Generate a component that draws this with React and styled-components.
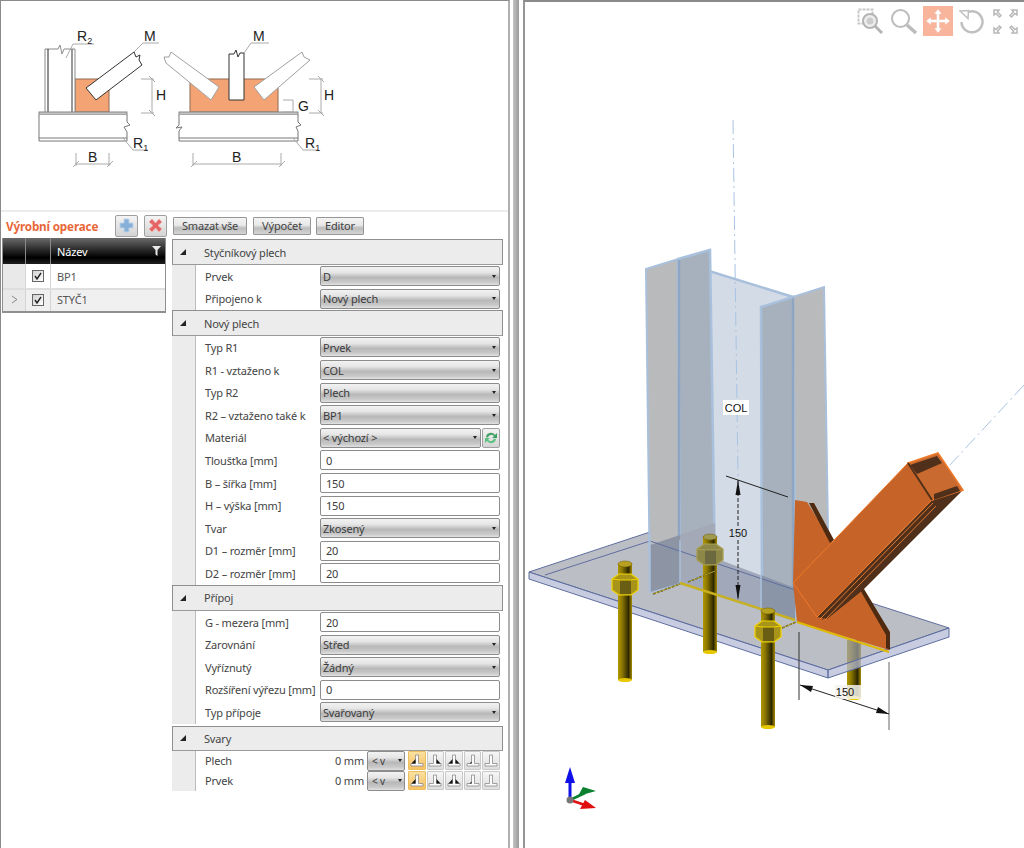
import React from 'react'
import styled, { createGlobalStyle } from 'styled-components'

const GlobalStyle = createGlobalStyle`
  html, body {
    margin: 0;
    padding: 0;
    background: #fff;
  }
  body {
    font-family: "Noto Sans", "Open Sans", "Liberation Sans", sans-serif;
    font-size: 11px;
    letter-spacing: -0.17px;
    color: #333;
  }
`

const Page = styled.div`
  display: flex;
  width: 1024px;
  height: 848px;
  overflow: hidden;
`

const LeftPane = styled.div`
  width: 510px;
  box-sizing: border-box;
  border-top: 1px solid #8a8a8a;
  border-left: 1px solid #8a8a8a;
  border-right: 2px solid #b0b0b0;
  display: flex;
  flex-direction: column;
`

const Splitter = styled.div`
  width: 13px;
  display: flex;
  justify-content: center;
  & > div {
    width: 6px;
    margin-right: 1px;
    background: linear-gradient(90deg, #c4c4c4, #9a9a9a);
  }
`

const RightPane = styled.div`
  position: relative;
  flex: 1;
  box-sizing: border-box;
  border-top: 2px solid #8a8a8a;
  border-left: 2px solid #969696;
`

const DiagramBox = styled.div`
  height: 209px;
  border-bottom: 2px solid #ececec;
`

const Toolbar = styled.div`
  height: 27px;
  display: flex;
  align-items: center;
  padding-left: 5px;
`

const ToolTitle = styled.span`
  width: 109px;
  font-size: 11.7px;
  font-weight: 700;
  color: #e8683a;
`

const IconButton = styled.button`
  width: 23px;
  height: 22px;
  margin-right: 6px;
  padding: 0;
  display: flex;
  align-items: center;
  justify-content: center;
  background: linear-gradient(#f4f4f4, #d4d4d4);
  border: 1px solid #a0a0a0;
  border-radius: 2px;
`

const TextButton = styled.button`
  height: 18px;
  padding: 0;
  width: ${p => p.$w}px;
  margin-right: ${p => p.$gap}px;
  font: inherit;
  letter-spacing: inherit;
  color: #444;
  background: linear-gradient(#f4f4f4 0%, #e8e8e8 45%, #bdbdbd 62%, #d4d4d4 100%);
  border: 1px solid #969696;
  border-radius: 1px;
`

const Body = styled.div`
  display: flex;
  align-items: flex-start;
  padding-left: 1px;
`

const GridTable = styled.div`
  width: 164px;
  margin-top: -1px;
  box-sizing: border-box;
  border: 1px solid #8f8f8f;
  border-top: 0;
  border-bottom-width: 2px;
`

const GridRow = styled.div`
  display: grid;
  grid-template-columns: 23px 25px 1fr;
  height: ${p => p.$h}px;
  background: ${p => p.$alt ? '#f0f0f0' : '#fff'};
  border-top: ${p => p.$alt ? '2px solid #dedede' : '0'};
  box-sizing: border-box;
`

const GridHead = styled(GridRow)`
  height: 26px;
  color: #fff;
  background: linear-gradient(#6a6a6a 0%, #2a2a2a 45%, #000 75%, #1e1e1e 100%);
`

const HeadCell = styled.div`
  display: flex;
  align-items: center;
  justify-content: space-between;
  padding: 0 4px 0 6px;
  border-right: 1px solid #8a8a8a;
  &:last-child { border-right: 0; }
`

const Cell = styled.div`
  display: flex;
  align-items: center;
  justify-content: ${p => p.$center ? 'center' : 'flex-start'};
  padding-left: ${p => p.$center ? 0 : 6}px;
  padding-bottom: ${p => p.$alt ? 2 : 0}px;
  background: ${p => p.$gutter ? '#e9e9e9' : 'transparent'};
  color: #555;
  border-right: 1px solid #d4d4d4;
  &:last-child { border-right: 0; }
`

const Check = styled.span`
  width: 10px;
  height: 10px;
  border: 1px solid #666;
  background: linear-gradient(135deg, #d0d0d0, #fff);
  display: flex;
  align-items: center;
  justify-content: center;
`

const Props = styled.div`
  width: 331px;
  margin-left: 6px;
`

const SectionHead = styled.div`
  height: ${p => p.$h || 26}px;
  box-sizing: border-box;
  display: flex;
  align-items: center;
  background: #ececec;
  border: 1px solid #8f8f8f;
  border-bottom-color: #9a9a9a;
  margin-top: ${p => p.$mt || 0}px;
  color: #444;
  span { margin-left: 18px; }
  svg { margin-left: 7px; }
`

const SectionBody = styled.div`
  border-left: 1px solid #bcbcbc;
`

const Gutter = styled.div`
  background: #ececec;
`

const SectionWrap = styled.div`
  display: grid;
  grid-template-columns: 23px 1fr;
`

const Row = styled.div`
  height: ${p => p.$h || 22.6}px;
  display: flex;
  align-items: center;
  padding: 0 3px 0 9px;
  color: #444;
`

const Label = styled.span`
  width: 115px;
  white-space: nowrap;
`

const SelectBox = styled.div`
  flex: 1;
  height: 20px;
  box-sizing: border-box;
  display: flex;
  align-items: center;
  justify-content: space-between;
  padding: 0 3px 0 2px;
  color: #3c3c3c;
  border: 1px solid #8c8c8c;
  border-radius: 2px;
  background: linear-gradient(#f2f2f2 0%, #e6e6e6 30%, #b8b8b8 58%, #cacaca 85%, #e2e2e2 100%);
`

const Caret = styled.i`
  width: 0;
  height: 0;
  border-left: 2.5px solid transparent;
  border-right: 2.5px solid transparent;
  border-top: 3px solid #222;
`

const InputBox = styled.div`
  flex: 1;
  height: 20px;
  box-sizing: border-box;
  display: flex;
  align-items: center;
  padding: 0 5px;
  background: #fff;
  border: 1px solid #8c8c8c;
  border-radius: 2px;
  color: #3c3c3c;
`

const RefreshButton = styled.div`
  width: 18px;
  height: 20px;
  margin-left: 1px;
  box-sizing: border-box;
  display: flex;
  align-items: center;
  justify-content: center;
  border: 1px solid #a0a0a0;
  border-radius: 2px;
  background: linear-gradient(#f2f2f2, #d4d4d4);
`

const WeldValue = styled.span`
  flex: 1;
  text-align: right;
  padding-right: 3px;
`

const WeldSelect = styled(SelectBox)`
  flex: none;
  width: 38px;
  margin-right: 2px;
  padding: 0 2px 0 4px;
  font-size: 10px;
`

const WeldButton = styled.div`
  width: 17.6px;
  height: 19px;
  margin-left: 1px;
  box-sizing: border-box;
  display: flex;
  align-items: center;
  justify-content: center;
  border: 1px solid ${p => p.$on ? '#e8c060' : '#c8c8c8'};
  border-radius: 1px;
  background: ${p => p.$on ? 'linear-gradient(#fbe0a0, #f8c060)' : 'linear-gradient(#f6f6f6, #dedede)'};
`

const Viewport = styled.svg`
  display: block;
  width: 499px;
  height: 846px;
`

const ViewTools = styled.div`
  position: absolute;
  top: 4px;
  right: 6px;
  display: flex;
  align-items: center;
`

const ViewTool = styled.div`
  width: ${p => p.$w}px;
  height: 30px;
  margin-left: ${p => p.$ml || 0}px;
  display: flex;
  align-items: center;
  justify-content: center;
  background: ${p => p.$on ? '#f9b49c' : 'transparent'};
`

const DiagramText = styled.text`
  font-family: "Liberation Sans", sans-serif;
  font-size: 14px;
  letter-spacing: 0;
  fill: #222;
`

const DiagramSub = styled.tspan`
  font-size: 9px;
`

const ViewText = styled.text`
  font-family: "Liberation Sans", sans-serif;
  font-size: 11px;
  letter-spacing: 0;
  fill: #111;
  text-anchor: middle;
`

const Sketch = () => (
  <svg width="380" height="209" viewBox="0 1 380 209" style={{ display: 'block' }}>
    <g fill="none" stroke="#9c9c9c" strokeWidth="1">
      {/* left detail */}
      <rect x="74" y="79" width="34" height="33" fill="#f4a474" stroke="#8c6a50" />
      <path d="M44 113V49H57L59 45L61 54L63 49H74V113" fill="#fff" stroke="#8a8a8a" />
      <path d="M47 49V112" stroke="#222" />
      <path d="M71 49V112" stroke="#777" strokeWidth="1.5" />
      <path d="M85 88L133 52L135 57L139 55L138 60L141 65L95 100Z" fill="#fff" stroke="#333" />
      <rect x="38" y="112" width="88" height="3" fill="#c4c4c4" stroke="#888" />
      <path d="M38 115V141H126V132L123 127L129 125L126 122V115" fill="#fff" stroke="#777" />
      <path d="M38 138H126" stroke="#777" />
      <path d="M72 44H93M65 58L72 44" stroke="#aaa" />
      <path d="M133 52L142 43H158" stroke="#aaa" />
      <path d="M140 79H153M140 113H153M151 79V113M148 76L154 82M148 110L154 116" stroke="#aaa" />
      <path d="M122 138L132 150H147" stroke="#aaa" />
      <path d="M75 153V166M108 153V166M74 164H110M72 167L78 161M106 167L112 161" stroke="#aaa" />
      {/* right detail */}
      <rect x="189" y="79" width="88" height="33" fill="#f4a474" stroke="#8c6a50" />
      <path d="M218 87L170 52L168 57L163 57L165 63L210 100Z" fill="#fff" stroke="#a0a0a0" />
      <path d="M253 87L301 52L303 57L309 60L263 100Z" fill="#fff" stroke="#a0a0a0" />
      <path d="M228 54H233L235 50L237 57L239 53H243V100H228Z" fill="#fff" stroke="#333" />
      <rect x="178" y="112" width="119" height="3" fill="#c4c4c4" stroke="#888" />
      <path d="M178 115V125L175 128L181 127L178 131V141H297V131L295 127L300 125L297 122V115" fill="#fff" stroke="#777" />
      <path d="M178 138H297" stroke="#777" />
      <path d="M243 53L250 43H268" stroke="#aaa" />
      <path d="M308 79H322M308 113H322M320 79V113M317 76L323 82M317 110L323 116" stroke="#aaa" />
      <path d="M282 100H292M282 112H292M292 100V112" stroke="#aaa" />
      <path d="M292 138L302 150H318" stroke="#aaa" />
      <path d="M192 153V166M280 153V166M192 164H280M190 167L196 161M278 167L284 161" stroke="#aaa" />
    </g>
    <DiagramText x="76" y="41">R<DiagramSub dy="3">2</DiagramSub></DiagramText>
    <DiagramText x="143" y="41">M</DiagramText>
    <DiagramText x="155" y="100">H</DiagramText>
    <DiagramText x="132" y="148">R<DiagramSub dy="3">1</DiagramSub></DiagramText>
    <DiagramText x="87" y="162">B</DiagramText>
    <DiagramText x="252" y="41">M</DiagramText>
    <DiagramText x="323" y="100">H</DiagramText>
    <DiagramText x="297" y="111">G</DiagramText>
    <DiagramText x="304" y="148">R<DiagramSub dy="3">1</DiagramSub></DiagramText>
    <DiagramText x="231" y="162">B</DiagramText>
  </svg>
)

const PlusIcon = () => (
  <svg width="15" height="15" viewBox="0 0 15 15">
    <path d="M5 1H10V5H14V10H10V14H5V10H1V5H5Z" fill="#86b0d8" stroke="#bcd2e8" />
  </svg>
)

const CrossIcon = () => (
  <svg width="15" height="15" viewBox="0 0 15 15">
    <path d="M1 4L4 1L7.5 5L11 1L14 4L10 7.5L14 11L11 14L7.5 10L4 14L1 11L5 7.5Z" fill="#e46464" stroke="#f0b0b0" />
  </svg>
)

const FilterIcon = () => (
  <svg width="9" height="10" viewBox="0 0 9 10">
    <path d="M0 0H9L5.5 4V10L3.5 8.5V4Z" fill="#e8e8e8" />
  </svg>
)

const CheckMark = () => (
  <svg width="8" height="8" viewBox="0 0 8 8">
    <path d="M1 4L3 7L7 1" fill="none" stroke="#222" strokeWidth="1.4" />
  </svg>
)

const Chevron = () => (
  <svg width="7" height="9" viewBox="0 0 7 9">
    <path d="M1 1L6 4.5L1 8" fill="none" stroke="#888" strokeWidth="1" />
  </svg>
)

const CollapseIcon = () => (
  <svg width="6" height="6" viewBox="0 0 6 6">
    <path d="M6 0V6H0Z" fill="#222" />
  </svg>
)

const RefreshIcon = () => (
  <svg width="14" height="14" viewBox="0 0 14 14">
    <path d="M2 6A5 5 0 0 1 11 4L13 2V7H8L10 5.2A3.4 3.4 0 0 0 4 6.5Z" fill="#3da060" />
    <path d="M12 8A5 5 0 0 1 3 10L1 12V7H6L4 8.8A3.4 3.4 0 0 0 10 7.5Z" fill="#5cc080" />
  </svg>
)

// tee section with the weld triangle on the side given by `kind`
const WeldIcon = ({ kind }) => (
  <svg width="14" height="14" viewBox="0 0 14 14">
    <path d="M5.5 1H8.5V9.5H13V12H1V9.5H5.5Z" fill="#fbfbfb" stroke="#8c8c8c" strokeWidth="0.8" />
    {(kind === 'left' || kind === 'both') && <path d="M5.5 5V9.5H1.5Z" fill="#111" />}
    {(kind === 'right' || kind === 'both') && <path d="M8.5 5V9.5H12.5Z" fill="#111" />}
    {kind === 'small' && <path d="M5.5 7.5V9.5H3.5Z" fill="#111" />}
  </svg>
)

const ZoomWindowIcon = () => (
  <svg width="26" height="26" viewBox="0 0 26 26" fill="none">
    <rect x="1.5" y="1.5" width="14" height="14" stroke="#c8c8c8" strokeWidth="2" strokeDasharray="3 1" />
    <circle cx="13" cy="13" r="7" fill="#eee" stroke="#b4b4b4" strokeWidth="2" />
    <circle cx="13" cy="13" r="3.5" fill="#ccc" />
    <path d="M18 18L25 25" stroke="#b4b4b4" strokeWidth="3" />
  </svg>
)

const ZoomIcon = () => (
  <svg width="28" height="26" viewBox="0 0 28 26" fill="none">
    <circle cx="10.5" cy="10.5" r="8.5" stroke="#bcbcbc" strokeWidth="2" />
    <path d="M17 17L26 25" stroke="#bcbcbc" strokeWidth="3.5" />
  </svg>
)

const PanIcon = () => (
  <svg width="26" height="26" viewBox="0 0 26 26">
    <path d="M13 1L17 6H14.5V11.5H20V9L25 13L20 17V14.5H14.5V20H17L13 25L9 20H11.5V14.5H6V17L1 13L6 9V11.5H11.5V6H9Z" fill="#fff" stroke="#eeb8a4" strokeWidth="0.5" />
  </svg>
)

const RotateIcon = () => (
  <svg width="26" height="26" viewBox="0 0 26 26" fill="none">
    <path d="M6 6A10.5 10.5 0 1 1 2.5 14" stroke="#c0c0c0" strokeWidth="2.5" />
    <path d="M1 3L9.5 2.5L9 10.5Z" fill="#fff" stroke="#c0c0c0" strokeWidth="1.5" />
  </svg>
)

const CornersIcon = () => (
  <svg width="25" height="25" viewBox="0 0 25 25" fill="none" stroke="#b8b8b8" strokeWidth="1.5">
    <path d="M1 1H6L4.5 3L8 6.5L6.5 8L3 4.5L1 6Z" />
    <path d="M24 1H19L20.5 3L17 6.5L18.5 8L22 4.5L24 6Z" />
    <path d="M1 24H6L4.5 22L8 18.5L6.5 17L3 20.5L1 19Z" />
    <path d="M24 24H19L20.5 22L17 18.5L18.5 17L22 20.5L24 19Z" />
  </svg>
)

const Bolt = ({ x, top, bottom, nutY, dim }) => (
  <g>
    <rect x={x - 7} y={top} width="14" height={bottom - top} fill="url(#rod)" />
    <ellipse cx={x} cy={bottom} rx="7" ry="2" fill="#e8c800" />
    <ellipse cx={x} cy={top + 1} rx="7" ry="3" fill={dim ? '#a09a50' : '#b8a020'} stroke="#6e5c00" strokeWidth="0.5" />
    <path
      d={`M${x - 13} ${nutY - 6}L${x - 6} ${nutY - 11}H${x + 6}L${x + 13} ${nutY - 6}V${nutY + 5}L${x + 6} ${nutY + 10}H${x - 6}L${x - 13} ${nutY + 5}Z`}
      fill={dim ? '#8e8848' : '#a89418'}
      stroke={dim ? '#a8a050' : '#f0d400'}
      strokeWidth="1.2"
    />
    <path d={`M${x - 5} ${nutY - 5}H${x + 6}V${nutY + 9}H${x - 5}Z`} fill={dim ? '#6c6840' : '#6a5e14'} />
    <path d={`M${x - 13} ${nutY - 6}L${x - 5} ${nutY - 5}L${x + 6} ${nutY - 5}L${x + 13} ${nutY - 6}`} fill="none" stroke={dim ? '#a8a050' : '#f0d400'} />
  </g>
)

const edge = '#a9c0dc'

// the model is drawn in page coordinates, so the viewBox starts at the pane corner
const Model = () => (
  <Viewport viewBox="525 2 499 846">
    <defs>
      <linearGradient id="rod" x1="0" x2="1" y1="0" y2="0">
        <stop offset="0" stopColor="#b09800" />
        <stop offset="0.3" stopColor="#8a7600" />
        <stop offset="0.75" stopColor="#2e2800" />
        <stop offset="1" stopColor="#a88e00" />
      </linearGradient>
    </defs>

    <path d="M1024 385L950 465" stroke="#a8c4e4" strokeWidth="1" strokeDasharray="14 4 2 4" fill="none" />

    {/* far rod shows through the plate */}
    <rect x="847" y="640" width="14" height="58" fill="url(#rod)" />
    <ellipse cx="854" cy="698" rx="7" ry="2" fill="#e8c800" />

    {/* base plate */}
    <path d="M529 572L650 532L949 628L828 670Z" fill="#9fa3ae" fillOpacity="0.7" stroke="#5f6e9f" />
    <path d="M529 572V579L828 678V670ZM828 678L949 637V628L828 670Z" fill="#b4bbd6" fillOpacity="0.75" stroke="#5f6e9f" />
    <path d="M650 532V541L545 575" fill="none" stroke="#5f6e9f" />

    {/* column */}
    <path d="M680 262L793 297V620L680 583Z" fill="#d3dbe6" stroke={edge} strokeWidth="2.5" />
    <path d="M646 269L678 259L680 583L650 592Z" fill="#b8babb" stroke={edge} strokeWidth="2" />
    <path d="M678 259L710 250L715 570L680 583Z" fill="#a6b1bd" stroke={edge} strokeWidth="2.5" />
    <path d="M761 307L793 297L796 620L762 610Z" fill="#a6b1bd" stroke={edge} strokeWidth="2.5" />
    <path d="M793 297L824 287L828 530L796 620Z" fill="#b8babb" stroke={edge} strokeWidth="2" />
    <path d="M679 260V583" stroke="#8ea6c4" strokeWidth="2.5" />
    <path d="M793 298V620" stroke="#8ea6c4" strokeWidth="2.5" />
    {/* plate seen through the column */}
    <path d="M715 558L795 588V620L680 583L715 570Z" fill="#a0a8ba" />
    <path d="M650 545L680 535L680 583L650 592Z" fill="#8d95a5" />
    <path d="M680 535L715 523L715 570L680 583Z" fill="#a3a9b6" />
    <path d="M761 575L795 588V620L762 610Z" fill="#8a96a8" />
    <path d="M650 541L795 590" fill="none" stroke="#5f6e9f" />
    <path d="M650 532V592M680 540V583M715 555V570M761 575V610" stroke={edge} strokeWidth="1.5" fill="none" />

    {/* column axis stays visible through the translucent web */}
    <path d="M733 120L738 478" stroke="#a8c4e4" strokeWidth="1" strokeDasharray="14 4 2 4" fill="none" />

    <Bolt x={710} top={536} bottom={652} nutY={555} dim />

    {/* welds on the plate */}
    <path d="M680 583L795 620" stroke="#c8b020" strokeWidth="2.5" fill="none" />
    <path d="M653 594L680 584M688 582L715 571M782 628L796 622" stroke="#333" strokeWidth="1.5" strokeDasharray="3 1" fill="none" />
    <path d="M653 594L680 584M688 582L715 571M782 628L796 622" stroke="#d4bc10" strokeWidth="0.8" fill="none" />

    <Bolt x={625} top={563} bottom={680} nutY={585} />
    <Bolt x={768} top={610} bottom={727} nutY={632} />

    {/* gusset and hollow section */}
    <path d="M795 500L807 502L832 542L860 590L889 634V650L797 622L793 583Z" fill="#c56328" />
    <path d="M809 503L814 503L834 540L830 543Z" fill="#4e2a10" />
    <path d="M860 590L864 589L890 632V650L886 648V635Z" fill="#4e2a10" />
    <path d="M797 622L889 652" stroke="#e0b800" strokeWidth="2" fill="none" />
    <path d="M932 500L963 490L863 590L827 619L817 617Z" fill="#50301a" />
    <path d="M793 583L908 463L932 500L817 617Z" fill="#c56328" stroke="#f07a2a" strokeWidth="1" />
    <path d="M933 503L820 619M936 506L825 620" stroke="#e07830" strokeWidth="1" fill="none" />
    <path d="M935 504L822 620" stroke="#50301a" strokeWidth="0.8" fill="none" />
    <path d="M908 463L938 453L963 490L932 500Z" fill="#c96a30" stroke="#f07a2a" strokeWidth="1.5" />
    <path d="M910 465L937 456L942 463L917 474Z" fill="#50301a" />
    <path d="M934 500L960 491L957 486L934 494Z" fill="#50301a" />
    <path d="M908 463L932 500" stroke="#50301a" strokeWidth="2" />

    {/* dimensions */}
    <path d="M726 476L788 497" stroke="#222" fill="none" />
    <path d="M738 480V600" stroke="#222" strokeDasharray="4 2" fill="none" />
    <path d="M738 480L735.5 495H740.5Z" fill="#111" />
    <path d="M738 600L735.5 585H740.5Z" fill="#111" />
    <path d="M799 632V700" stroke="#333" fill="none" />
    <path d="M889 662V730" stroke="#666" fill="none" />
    <path d="M800 685L889 714" stroke="#222" fill="none" />
    <path d="M800 685L813 686L811 692Z" fill="#111" />
    <path d="M889 714L876 713L878 707Z" fill="#111" />
    <rect x="835" y="685" width="26" height="14" fill="#f4f2ee" fillOpacity="0.85" />
    <rect x="723" y="400" width="26" height="15" fill="#fff" />
    <rect x="727" y="526" width="22" height="14" fill="#d3dbe6" />
    <ViewText x="736" y="412">COL</ViewText>
    <ViewText x="738" y="537">150</ViewText>
    <ViewText x="845" y="696">150</ViewText>

    {/* triad */}
    <path d="M570 800V780" stroke="#1010e8" strokeWidth="3" />
    <path d="M570 767L575 783H565Z" fill="#1010e8" />
    <path d="M570 800L585 793" stroke="#0a8030" strokeWidth="2.5" />
    <path d="M596 791L578 796L583 787Z" fill="#0a8030" />
    <path d="M570 800L585 805" stroke="#e01010" strokeWidth="2.5" />
    <path d="M596 808L580 809L585 800Z" fill="#e01010" />
    <circle cx="570" cy="800" r="3.5" fill="#777" />
  </Viewport>
)

const SelectField = ({ value }) => (
  <SelectBox>{value}<Caret /></SelectBox>
)

const sections = [
  {
    title: 'Styčníkový plech',
    rows: [
      { label: 'Prvek', select: 'D' },
      { label: 'Připojeno k', select: 'Nový plech' },
    ],
  },
  {
    title: 'Nový plech',
    rows: [
      { label: 'Typ R1', select: 'Prvek' },
      { label: 'R1 - vztaženo k', select: 'COL' },
      { label: 'Typ R2', select: 'Plech' },
      { label: 'R2 – vztaženo také k', select: 'BP1' },
      { label: 'Materiál', select: '< výchozí >', refresh: true },
      { label: 'Tloušťka [mm]', input: '0' },
      { label: 'B – šířka [mm]', input: '150' },
      { label: 'H – výška [mm]', input: '150' },
      { label: 'Tvar', select: 'Zkosený' },
      { label: 'D1 – rozměr [mm]', input: '20' },
      { label: 'D2 – rozměr [mm]', input: '20' },
    ],
  },
  {
    title: 'Přípoj',
    rows: [
      { label: 'G - mezera [mm]', input: '20' },
      { label: 'Zarovnání', select: 'Střed' },
      { label: 'Vyříznutý', select: 'Žádný' },
      { label: 'Rozšíření výřezu [mm]', input: '0' },
      { label: 'Typ přípoje', select: 'Svařovaný' },
    ],
  },
]

const weldKinds = ['left', 'right', 'both', 'small', 'none']

const WeldRow = ({ label }) => (
  <Row $h={20}>
    {label}
    <WeldValue>0 mm</WeldValue>
    <WeldSelect>&lt; v<Caret /></WeldSelect>
    {weldKinds.map((kind, i) => (
      <WeldButton key={kind} $on={i === 0}><WeldIcon kind={kind} /></WeldButton>
    ))}
  </Row>
)

const Section = ({ title, children, mt, h }) => (
  <>
    <SectionHead $mt={mt} $h={h}><CollapseIcon /><span>{title}</span></SectionHead>
    <SectionWrap>
      <Gutter />
      <SectionBody>{children}</SectionBody>
    </SectionWrap>
  </>
)

export default function App() {
  return (
    <Page>
      <GlobalStyle />
      <LeftPane>
        <DiagramBox><Sketch /></DiagramBox>
        <Toolbar>
          <ToolTitle>Výrobní operace</ToolTitle>
          <IconButton><PlusIcon /></IconButton>
          <IconButton><CrossIcon /></IconButton>
          <TextButton $w={74} $gap={6}>Smazat vše</TextButton>
          <TextButton $w={58} $gap={5}>Výpočet</TextButton>
          <TextButton $w={48} $gap={0}>Editor</TextButton>
        </Toolbar>
        <Body>
          <GridTable>
            <GridHead>
              <HeadCell />
              <HeadCell />
              <HeadCell>Název<FilterIcon /></HeadCell>
            </GridHead>
            <GridRow $h={24}>
              <Cell $gutter />
              <Cell $center><Check><CheckMark /></Check></Cell>
              <Cell>BP1</Cell>
            </GridRow>
            <GridRow $h={23} $alt>
              <Cell $gutter $center $alt><Chevron /></Cell>
              <Cell $center $alt><Check><CheckMark /></Check></Cell>
              <Cell $alt>STYČ1</Cell>
            </GridRow>
          </GridTable>
          <Props>
            {sections.map(s => (
              <Section key={s.title} title={s.title}>
                {s.rows.map(r => (
                  <Row key={r.label}>
                    <Label>{r.label}</Label>
                    {r.select && <SelectField value={r.select} />}
                    {r.input && <InputBox>{r.input}</InputBox>}
                    {r.refresh && <RefreshButton><RefreshIcon /></RefreshButton>}
                  </Row>
                ))}
              </Section>
            ))}
            <Section title="Svary" mt={2} h={25}>
              <WeldRow label="Plech" />
              <WeldRow label="Prvek" />
            </Section>
          </Props>
        </Body>
      </LeftPane>
      <Splitter><div /></Splitter>
      <RightPane>
        <Model />
        <ViewTools>
          <ViewTool $w={26}><ZoomWindowIcon /></ViewTool>
          <ViewTool $w={28} $ml={7}><ZoomIcon /></ViewTool>
          <ViewTool $w={30} $ml={5} $on><PanIcon /></ViewTool>
          <ViewTool $w={26} $ml={6}><RotateIcon /></ViewTool>
          <ViewTool $w={25} $ml={8}><CornersIcon /></ViewTool>
        </ViewTools>
      </RightPane>
    </Page>
  )
}
